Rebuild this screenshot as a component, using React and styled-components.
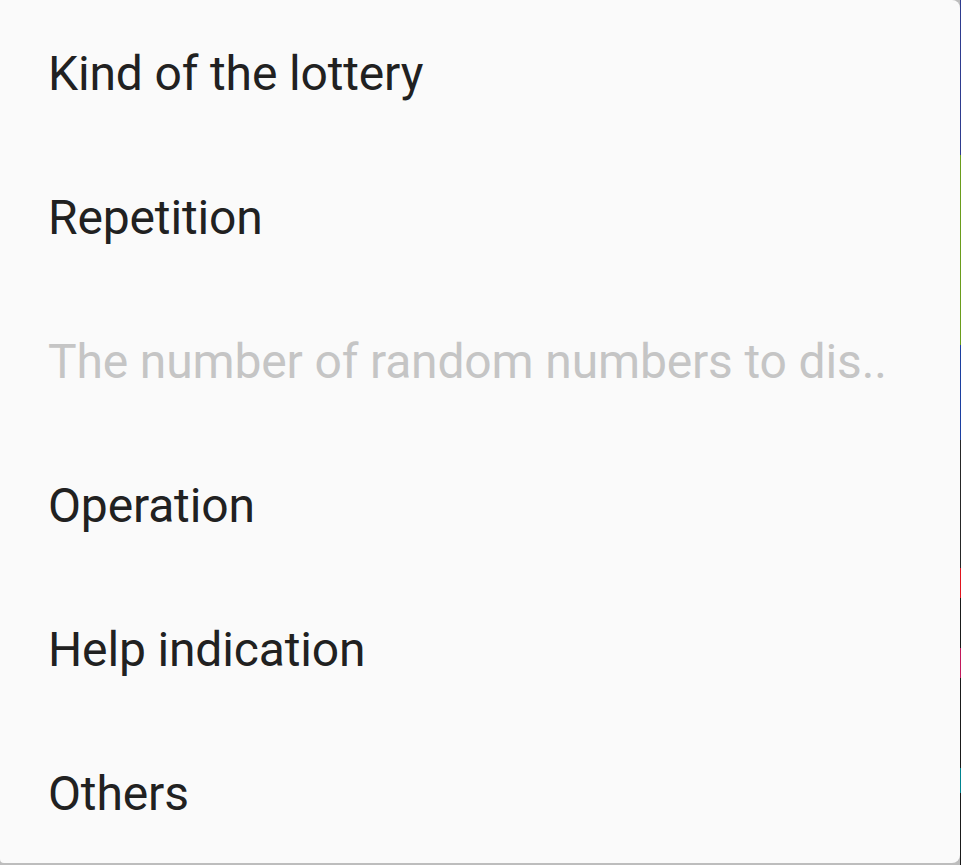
import React from 'react';
import styled, { createGlobalStyle } from 'styled-components';

const GlobalStyle = createGlobalStyle`
  html, body {
    margin: 0;
    padding: 0;
    background: #b9b9b9;
    font-family: Roboto, "Noto Sans", sans-serif;
  }
`;

const Screen = styled.div`
  width: 961px;
  height: 865px;
  display: flex;
  overflow: hidden;
  background: #bdbdbd;
`;

const Menu = styled.ul`
  width: 960px;
  height: 863px;
  margin: 0;
  padding: 0;
  list-style: none;
  background: #fafafa;
  border-radius: 0 8px 8px 4px;
  display: flex;
  flex-direction: column;
  flex-shrink: 0;
`;

const Item = styled.li`
  height: 144px;
  box-sizing: border-box;
  padding: 2px 0 0 48px;
  flex-shrink: 0;
  display: flex;
  align-items: center;
  font-size: 48px;
  letter-spacing: -0.15px;
  color: ${props => (props.disabled ? '#c5c5c5' : '#212121')};
  white-space: nowrap;
`;

const Edge = styled.div`
  width: 1px;
  display: flex;
  flex-direction: column;
`;

const EdgePart = styled.div`
  height: ${props => props.h}px;
  background: ${props => props.c};
`;

const edge = [
  [155, '#2e3b8f'],
  [190, '#6a9c1c'],
  [95, '#1c3fa0'],
  [128, '#262626'],
  [30, '#e0141e'],
  [50, '#1a1a1a'],
  [30, '#c2185b'],
  [90, '#1a1a1a'],
  [25, '#00838f'],
  [72, '#1a1a1a']
];

const items = [
  { label: 'Kind of the lottery' },
  { label: 'Repetition' },
  { label: 'The number of random numbers to dis..', disabled: true },
  { label: 'Operation' },
  { label: 'Help indication' },
  { label: 'Others' }
];

export default function App() {
  return (
    <>
      <GlobalStyle />
      <Screen>
        <Menu>
          {items.map(item => (
            <Item key={item.label} disabled={item.disabled}>
              {item.label}
            </Item>
          ))}
        </Menu>
        <Edge>
          {edge.map(([h, c], i) => (
            <EdgePart key={i} h={h} c={c} />
          ))}
        </Edge>
      </Screen>
    </>
  );
}
